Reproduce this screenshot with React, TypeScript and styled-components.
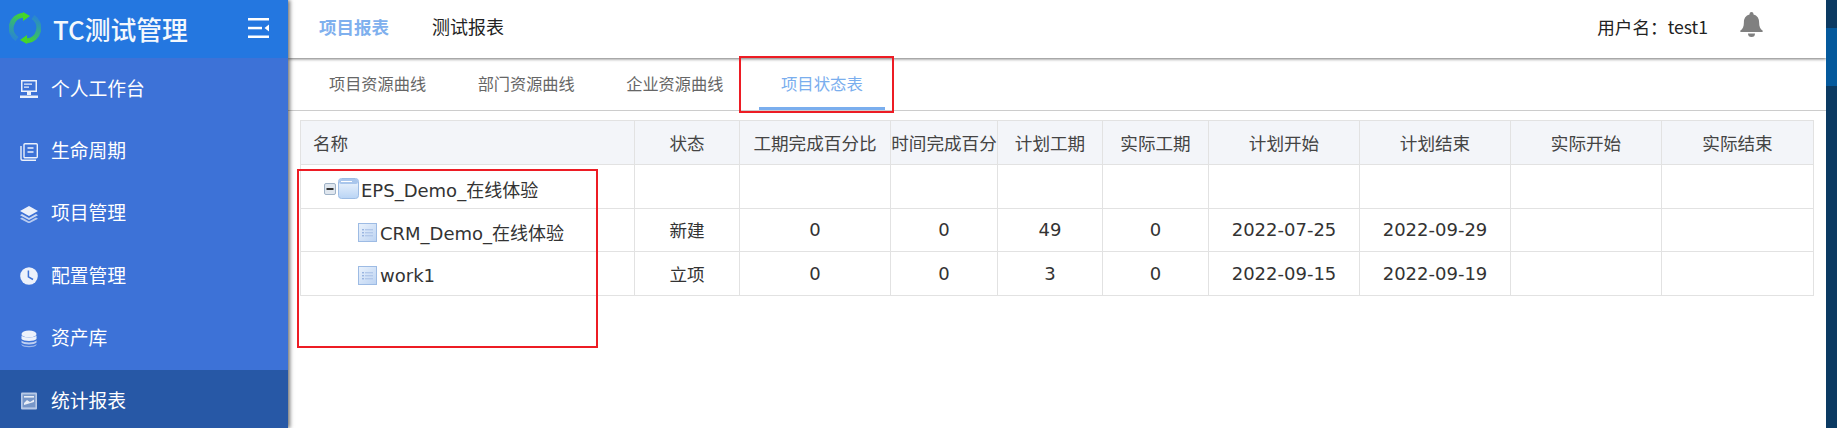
import React from "react";
import styled, { createGlobalStyle } from "styled-components";

const Global = createGlobalStyle`
  html, body { margin: 0; padding: 0; background: #fff; overflow: hidden; }
  * { box-sizing: border-box; }
`;

const FONT = `"Noto Sans CJK SC", "DejaVu Sans", sans-serif`;
const LATIN = `"DejaVu Sans", "Noto Sans CJK SC", sans-serif`;

const Page = styled.div`
  position: relative;
  display: flex;
  width: 1837px;
  height: 428px;
  overflow: hidden;
  font-family: ${FONT};
  color: #333;
`;
const Sidebar = styled.aside`
  width: 288px;
  flex: none;
  background: #3d72d7;
  box-shadow: 2px 0 4px rgba(0, 0, 0, 0.55);
  z-index: 3;
`;
const Brand = styled.div`
  height: 58px;
  background: #2477e0;
  display: flex;
  align-items: center;
  padding: 0 19px 2px 9px;
  color: #fff;
`;
const BrandName = styled.div`
  margin-left: 12px;
  flex: 1;
  font-size: 25.8px;
  font-weight: 500;
  white-space: nowrap;
  opacity: 0.95;
`;
const MenuItem = styled.div<{ $active?: boolean }>`
  height: 62.4px;
  display: flex;
  align-items: center;
  gap: 13px;
  padding-left: 20px;
  font-size: 18.8px;
  color: #fff;
  background: ${(p) => (p.$active ? "#2758a6" : "transparent")};
`;
const MenuLabel = styled.span`
  padding-bottom: 4px;
`;
const MenuIcon = styled.svg`
  width: 18px;
  height: 18px;
  flex: none;
  opacity: 0.9;
`;
const Main = styled.main`
  flex: 1;
  min-width: 0;
  display: flex;
  flex-direction: column;
`;
const TopBar = styled.header`
  height: 58px;
  flex: none;
  display: flex;
  align-items: center;
  padding: 0 63px 6px 31px;
  background: #fff;
  box-shadow: 0 1px 3px rgba(0, 0, 0, 0.55);
  z-index: 2;
`;
const TopLink = styled.div<{ $active?: boolean }>`
  font-size: ${(p) => (p.$active ? "17.5px" : "18px")};
  margin-right: ${(p) => (p.$active ? "43px" : "41px")};
  font-weight: ${(p) => (p.$active ? 700 : 400)};
  color: ${(p) => (p.$active ? "#7fb0ee" : "#222")};
`;
const UserArea = styled.div`
  margin-left: auto;
  display: flex;
  align-items: center;
  gap: 32px;
`;
const UserName = styled.div`
  font-size: 17.6px;
  color: #222;
`;
const BellWrap = styled.svg`
  flex: none;
  margin-bottom: 3px;
`;
const TabBar = styled.nav`
  height: 53px;
  flex: none;
  display: flex;
  padding-left: 15px;
  border-bottom: 1px solid #ccc;
`;
const Tab = styled.div<{ $active?: boolean }>`
  height: 52px;
  padding: 0 ${(p) => (p.$active ? "22px" : "25.5px")} 0 ${(p) => (p.$active ? "22px" : "26px")};
  margin-left: ${(p) => (p.$active ? "10px" : "0")};
  display: flex;
  align-items: center;
  font-size: ${(p) => (p.$active ? "16.4px" : "16.2px")};
  color: ${(p) => (p.$active ? "#7aaeee" : "#666")};
  border-bottom: 3px solid ${(p) => (p.$active ? "#7aaeee" : "transparent")};
`;
const Content = styled.section`
  padding: 9px 13px 0 12px;
`;
const Table = styled.table`
  width: 1513px;
  table-layout: fixed;
  border-collapse: collapse;
`;
const HeadCell = styled.th<{ $left?: boolean }>`
  height: 44px;
  padding: 0 0 0 ${(p) => (p.$left ? "12px" : "0")};
  background: #f3f5f9;
  border: 1px solid #e2e2e2;
  font-size: 17.6px;
  font-weight: 400;
  color: #444;
  white-space: nowrap;
  overflow: hidden;
  text-align: ${(p) => (p.$left ? "left" : "center")};
`;
const Cell = styled.td`
  height: 43.6px;
  padding: 0;
  border: 1px solid #e2e2e2;
  font-family: ${LATIN};
  font-size: 18px;
  color: #333;
  text-align: center;
  white-space: nowrap;
`;
const StatusCell = styled(Cell)`
  font-family: ${FONT};
  font-size: 17.6px;
`;
const TreeRow = styled.div<{ $indent: number }>`
  display: flex;
  align-items: center;
  padding: 5px 0 0 ${(p) => p.$indent}px;
  font-size: 18px;
  color: #333;
`;
const RightStrip = styled.div`
  width: 11px;
  flex: none;
  background: #0b3a62;
  padding-top: 28px;
  z-index: 4;
`;
const StripMark = styled.div`
  height: 58px;
  background: #04599c;
`;
const Annotation = styled.div<{ $x: number; $y: number; $w: number; $h: number }>`
  position: absolute;
  left: ${(p) => p.$x}px;
  top: ${(p) => p.$y}px;
  width: ${(p) => p.$w}px;
  height: ${(p) => p.$h}px;
  border: 2px solid #ed1c24;
  z-index: 5;
`;

const Logo = () => (
  <svg width="32" height="32" viewBox="0 0 32 32" style={{ flex: "none" }}>
    <defs>
      <linearGradient id="lg" gradientUnits="userSpaceOnUse" x1="16" y1="3" x2="6" y2="26">
        <stop offset="0" stopColor="#45d826" />
        <stop offset="0.4" stopColor="#35b578" />
        <stop offset="1" stopColor="#2a88cc" />
      </linearGradient>
      <linearGradient id="lg2" gradientUnits="userSpaceOnUse" x1="16" y1="29" x2="26" y2="6">
        <stop offset="0" stopColor="#45d826" />
        <stop offset="0.4" stopColor="#35b578" />
        <stop offset="1" stopColor="#2a88cc" />
      </linearGradient>
    </defs>
    <path d="M8 27 A13 13 0 0 1 14 3.2" fill="none" stroke="url(#lg)" strokeWidth="5" />
    <path d="M14 0 L21 4 L14 9 Z" fill="#45d826" />
    <path d="M24 5 A13 13 0 0 1 18 28.8" fill="none" stroke="url(#lg2)" strokeWidth="5" />
    <path d="M18 32 L11 28 L18 23 Z" fill="#45d826" />
  </svg>
);

const Collapse = () => (
  <svg width="21" height="20" viewBox="0 0 21 20" style={{ flex: "none" }}>
    <rect x="0" y="0" width="21" height="2.5" fill="#fff" />
    <rect x="0" y="8.8" width="14" height="2.5" fill="#fff" />
    <path d="M21 6.5 L16.5 10 L21 13.5 Z" fill="#fff" />
    <rect x="0" y="17.5" width="21" height="2.5" fill="#fff" />
  </svg>
);

const icons: Record<string, React.ReactNode> = {
  desk: (
    <path
      fill="#fff"
      fillRule="evenodd"
      d="M1 0h16v12H1zM2.5 1.5v9h13v-9zM4 3.5h8v1.2H4zM4 6.5h5v1.2H4zM7 12h4v3H7zM0 15.5h18V18H0z"
    />
  ),
  book: (
    <g fill="none" stroke="#fff" strokeWidth="1.4">
      <rect x="4" y="0.7" width="13.3" height="14" rx="1" />
      <path d="M1 3v12.5A1.8 1.8 0 0 0 2.8 17.3H16" />
      <path d="M7.5 5h6M7.5 9h6" />
    </g>
  ),
  layers: (
    <g fill="#fff">
      <path d="M9 1 L18 6 L9 11 L0 6 Z" />
      <path d="M2 9 L9 13 L16 9 L18 10.2 L9 15 L0 10.2 Z" opacity="0.8" />
      <path d="M2 12.6 L9 16.4 L16 12.6 L18 13.8 L9 18.4 L0 13.8 Z" opacity="0.7" />
    </g>
  ),
  clock: (
    <g>
      <circle cx="9" cy="9" r="8.8" fill="#fff" />
      <path d="M8.4 3.5v6.4l4.6 2.6" fill="none" stroke="#3d72d7" strokeWidth="1.5" />
    </g>
  ),
  db: (
    <g fill="#fff">
      <ellipse cx="9" cy="4" rx="7.5" ry="3.6" />
      <path d="M1.5 5.5C3 8 15 8 16.5 5.5V9C15 11.5 3 11.5 1.5 9Z" />
      <path d="M1.5 10.5C3 13 15 13 16.5 10.5V12.5C15 15 3 15 1.5 12.5Z" opacity="0.75" />
      <path d="M1.5 14C3 16.5 15 16.5 16.5 14V15C15 18 3 18 1.5 15Z" opacity="0.55" />
    </g>
  ),
  report: (
    <g>
      <rect x="1" y="0.5" width="16" height="17" rx="1" fill="#c7d6ee" />
      <rect x="2.6" y="2.4" width="12.8" height="13" fill="#7f9dcc" />
      <rect x="4" y="4" width="10" height="1.6" fill="#fff" />
      <path d="M4 11 L7 8 L10 10 L14 7.5 V10 L4 13 Z" fill="#fff" />
    </g>
  ),
};

const menu = [
  ["desk", "个人工作台"],
  ["book", "生命周期"],
  ["layers", "项目管理"],
  ["clock", "配置管理"],
  ["db", "资产库"],
  ["report", "统计报表"],
];

const Bell = () => (
  <BellWrap width="23" height="25" viewBox="0 0 23 25">
    <path
      fill="#808080"
      d="M11.5 0a2 2 0 0 1 2 2v.6c3.8 1 5.6 4 5.6 7.6 0 4.4 1.2 6.6 3.4 8.4.6.5.3 1.4-.5 1.4H1c-.8 0-1.1-.9-.5-1.4 2.2-1.8 3.4-4 3.4-8.4 0-3.6 1.8-6.6 5.6-7.6V2a2 2 0 0 1 2-2z"
    />
    <path fill="#808080" d="M8 21.5h7a3.5 3.5 0 0 1-7 0z" />
  </BellWrap>
);

const MinusBox = () => (
  <svg width="12" height="12" viewBox="0 0 12 12" style={{ flex: "none", marginRight: 2 }}>
    <rect x="0.5" y="0.5" width="11" height="11" rx="1.5" fill="#dfe6ee" stroke="#9fb2c6" />
    <rect x="2.5" y="5" width="7" height="2" fill="#333" />
  </svg>
);

const FolderIcon = () => (
  <svg width="21" height="21" viewBox="0 0 21 21" style={{ flex: "none", marginRight: 2 }}>
    <defs>
      <linearGradient id="fg" x1="0" y1="0" x2="0" y2="1">
        <stop offset="0" stopColor="#f2f7fd" />
        <stop offset="1" stopColor="#b9d4f5" />
      </linearGradient>
    </defs>
    <rect x="0.5" y="0.5" width="20" height="20" rx="3" fill="url(#fg)" stroke="#9dbce4" />
    <rect x="1" y="1" width="19" height="5" rx="2" fill="#a9c6ec" />
    <rect x="3" y="3" width="11" height="1" fill="#fff" />
  </svg>
);

const FileIcon = () => (
  <svg width="19" height="19" viewBox="0 0 19 19" style={{ flex: "none", marginRight: 3 }}>
    <defs>
      <linearGradient id="fi" x1="0" y1="0" x2="1" y2="1">
        <stop offset="0" stopColor="#eaf2fc" />
        <stop offset="1" stopColor="#bcd3f2" />
      </linearGradient>
    </defs>
    <rect x="0.5" y="0.5" width="18" height="18" fill="url(#fi)" stroke="#9dbbe4" />
    {[6, 9, 12].map((y) => (
      <g key={y}>
        <rect x="4" y={y} width="2" height="1.4" fill="#9ab5e0" />
        <rect x="7" y={y} width="8" height="1.4" fill="#b2c8ea" />
      </g>
    ))}
  </svg>
);

const columns = [334, 105, 151, 107, 105, 106, 151, 151, 151, 152];
const heads = ["名称", "状态", "工期完成百分比", "时间完成百分", "计划工期", "实际工期", "计划开始", "计划结束", "实际开始", "实际结束"];
const rows = [
  { icon: <FileIcon />, name: "CRM_Demo_在线体验", status: "新建", vals: ["0", "0", "49", "0", "2022-07-25", "2022-09-29", "", ""] },
  { icon: <FileIcon />, name: "work1", status: "立项", vals: ["0", "0", "3", "0", "2022-09-15", "2022-09-19", "", ""] },
];

export default function App() {
  return (
    <Page>
      <Global />
      <Sidebar>
        <Brand>
          <Logo />
          <BrandName>TC测试管理</BrandName>
          <Collapse />
        </Brand>
        {menu.map(([icon, label]) => (
          <MenuItem key={label} $active={label === "统计报表"}>
            <MenuIcon viewBox="0 0 18 18">{icons[icon]}</MenuIcon>
            <MenuLabel>{label}</MenuLabel>
          </MenuItem>
        ))}
      </Sidebar>
      <Main>
        <TopBar>
          <TopLink $active>项目报表</TopLink>
          <TopLink>测试报表</TopLink>
          <UserArea>
            <UserName>用户名：test1</UserName>
            <Bell />
          </UserArea>
        </TopBar>
        <TabBar>
          <Tab>项目资源曲线</Tab>
          <Tab>部门资源曲线</Tab>
          <Tab>企业资源曲线</Tab>
          <Tab $active>项目状态表</Tab>
        </TabBar>
        <Content>
          <Table>
            <colgroup>
              {columns.map((w, i) => (
                <col key={i} width={w} />
              ))}
            </colgroup>
            <thead>
              <tr>
                {heads.map((h, i) => (
                  <HeadCell key={h} $left={i === 0}>
                    {h}
                  </HeadCell>
                ))}
              </tr>
            </thead>
            <tbody>
              <tr>
                <Cell>
                  <TreeRow $indent={23}>
                    <MinusBox />
                    <FolderIcon />
                    EPS_Demo_在线体验
                  </TreeRow>
                </Cell>
                {heads.slice(1).map((h) => (
                  <Cell key={h} />
                ))}
              </tr>
              {rows.map((r) => (
                <tr key={r.name}>
                  <Cell>
                    <TreeRow $indent={57}>
                      {r.icon}
                      {r.name}
                    </TreeRow>
                  </Cell>
                  <StatusCell>{r.status}</StatusCell>
                  {r.vals.map((v, i) => (
                    <Cell key={i}>{v}</Cell>
                  ))}
                </tr>
              ))}
            </tbody>
          </Table>
        </Content>
      </Main>
      <RightStrip>
        <StripMark />
      </RightStrip>
      <Annotation $x={739} $y={56} $w={155} $h={57} />
      <Annotation $x={297} $y={169} $w={301} $h={179} />
    </Page>
  );
}
